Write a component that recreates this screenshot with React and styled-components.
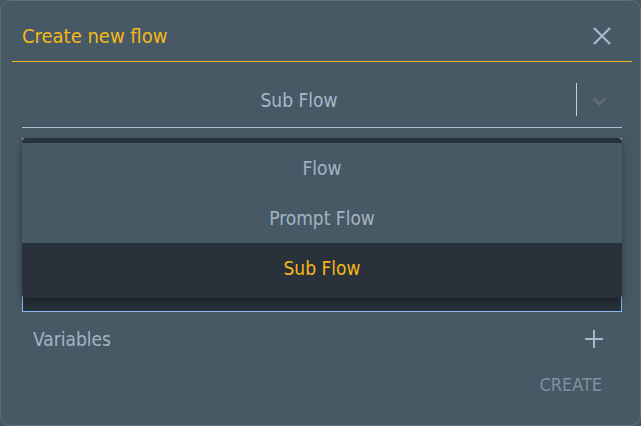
import React, { useState } from 'react';
import styled, { createGlobalStyle } from 'styled-components';

const GlobalStyle = createGlobalStyle`
  html, body {
    margin: 0;
    padding: 0;
    background: #475865;
  }
  body {
    font-family: 'Liberation Sans Narrow', 'DejaVu Sans Condensed', Roboto, sans-serif;
  }
`;

const Dialog = styled.div`
  width: 641px;
  height: 426px;
  box-sizing: border-box;
  background: #485966;
  border: 1px solid #5e6f7c;
  border-radius: 10px;
  overflow: hidden;
`;

const Header = styled.div`
  height: 50px;
  margin: 0 8px 0 11px;
  padding: 10px 21px 0 10px;
  display: flex;
  align-items: center;
  justify-content: space-between;
  border-bottom: 1px solid #f3b61c;
`;

const Title = styled.h2`
  margin: 0;
  font-size: 20px;
  font-weight: 400;
  color: #f6b817;
`;

const IconButton = styled.button`
  background: none;
  border: 0;
  padding: 0;
  display: flex;
  cursor: pointer;
`;

const Body = styled.div`
  padding: 0 18px 0 21px;
`;

const Select = styled.div`
  height: 55px;
  padding-top: 10px;
  display: flex;
  align-items: center;
  border-bottom: 1px solid #a9bccb;
`;

const SelectValue = styled.div`
  flex: 1;
  text-align: center;
  font-size: 19px;
  color: #a7b8c6;
`;

const Separator = styled.div`
  width: 1px;
  height: 33px;
  background: #c3cfd9;
`;

const Chevron = styled.div`
  width: 45px;
  display: flex;
  justify-content: center;
  padding-top: 3px;
`;

const FieldWrap = styled.div`
  position: relative;
  margin-top: 10px;
`;

const TextArea = styled.div`
  height: 172px;
  background: #28323b;
  border: 1px solid #8cb6ee;
`;

const Menu = styled.ul`
  position: absolute;
  top: 0;
  left: 0;
  right: 0;
  margin: 0;
  padding: 5px 0;
  list-style: none;
  background: #29323b;
  border-radius: 4px;
  box-shadow: 0 4px 10px rgba(0, 0, 0, 0.35);
`;

const MenuItem = styled.li`
  height: 50px;
  display: flex;
  align-items: center;
  justify-content: center;
  font-size: 19px;
  color: ${(p) => (p.selected ? '#f6b817' : '#a3b4c2')};
  background: ${(p) => (p.selected ? '#29323b' : '#485966')};
  cursor: pointer;
`;

const VarRow = styled.div`
  height: 54px;
  display: flex;
  align-items: center;
  justify-content: space-between;
  padding: 0 19px 0 11px;
`;

const Label = styled.span`
  font-size: 19px;
  color: #a3b4c2;
`;

const Footer = styled.div`
  display: flex;
  justify-content: flex-end;
  padding-right: 20px;
`;

const CreateButton = styled.button`
  background: none;
  border: 0;
  padding: 8px 0;
  font-family: inherit;
  font-size: 18px;
  color: #7f919e;
  text-transform: uppercase;
`;

const options = ['Flow', 'Prompt Flow', 'Sub Flow'];

export default function App() {
  const [value, setValue] = useState('Sub Flow');

  return (
    <>
      <GlobalStyle />
      <Dialog>
        <Header>
          <Title>Create new flow</Title>
          <IconButton aria-label="close">
            <svg width="18" height="18" viewBox="0 0 18 18">
              <path d="M1 1L17 17M17 1L1 17" stroke="#a7b8c6" strokeWidth="2.2" />
            </svg>
          </IconButton>
        </Header>
        <Body>
          <Select>
            <SelectValue>{value}</SelectValue>
            <Separator />
            <Chevron>
              <svg width="15" height="9" viewBox="0 0 15 9">
                <path d="M1.5 1.5L7.5 7L13.5 1.5" stroke="#656a6e" strokeWidth="2.8" fill="none" />
              </svg>
            </Chevron>
          </Select>
          <FieldWrap>
            <TextArea />
            <Menu>
              {options.map((o) => (
                <MenuItem key={o} selected={o === value} onClick={() => setValue(o)}>
                  {o}
                </MenuItem>
              ))}
            </Menu>
          </FieldWrap>
          <VarRow>
            <Label>Variables</Label>
            <IconButton aria-label="add variable">
              <svg width="18" height="18" viewBox="0 0 18 18">
                <path d="M9 0V18M0 9H18" stroke="#a7b8c6" strokeWidth="2" />
              </svg>
            </IconButton>
          </VarRow>
          <Footer>
            <CreateButton disabled>Create</CreateButton>
          </Footer>
        </Body>
      </Dialog>
    </>
  );
}
